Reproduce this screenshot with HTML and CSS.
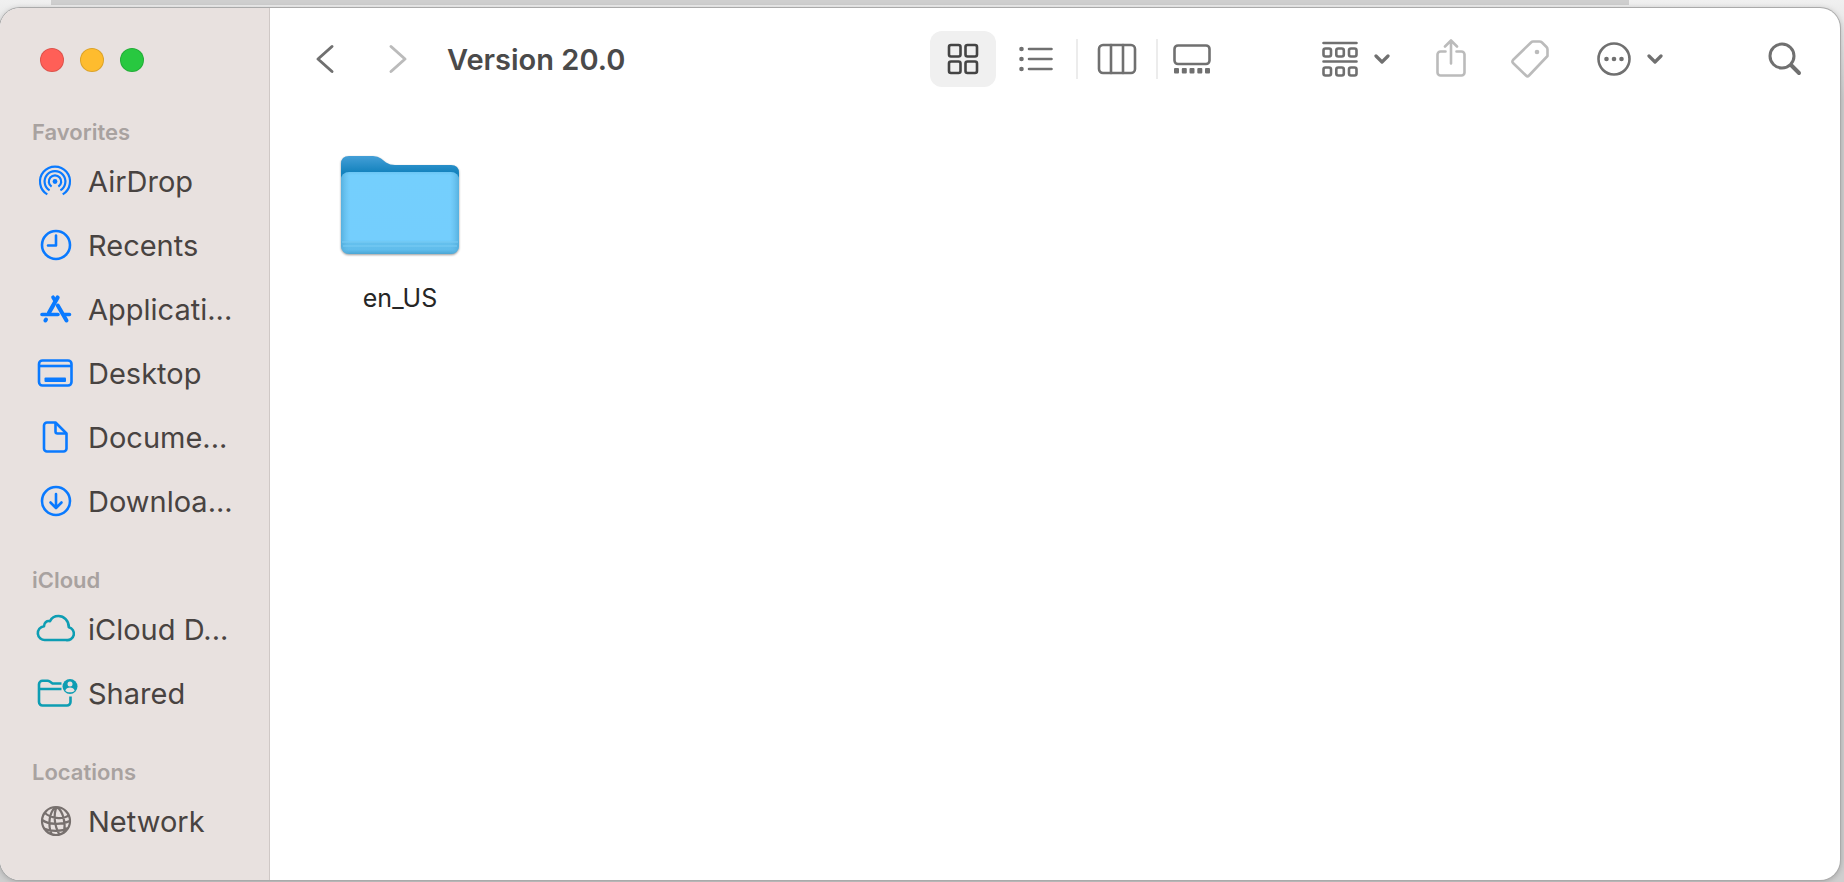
FILE: index.html
```html
<!DOCTYPE html>
<html lang="en">
<head>
<meta charset="utf-8">
<title>Version 20.0</title>
<link rel="stylesheet" href="styles.css">
</head>
<body>
<div class="backdrop"></div>
<div class="window">
  <aside class="sidebar">
    <div class="lights">
      <button class="light close" aria-label="Close"></button>
      <button class="light minimize" aria-label="Minimize"></button>
      <button class="light expand" aria-label="Zoom"></button>
    </div>
    <nav class="places">
      <section class="group">
        <h2 class="heading">Favorites</h2>
        <a class="place" href="#airdrop">
          <svg class="icon fine" viewBox="0 0 40 40"><circle cx="20" cy="20.500" r="2.400" fill="currentColor" stroke="none"/><path d="M16.600 25.700a6.200 6.200 0 1 1 6.800 0M14.600 29.400a10.400 10.400 0 1 1 10.800 0M12.300 33.400a15 15 0 1 1 15.400 0"/></svg>
          <span>AirDrop</span></a>
        <a class="place" href="#recents">
          <svg class="icon" viewBox="0 0 40 40"><circle cx="21" cy="20" r="14"/><path d="M21 10.500V20.500H13" stroke-linecap="round" stroke-linejoin="round"/></svg>
          <span>Recents</span></a>
        <a class="place" href="#applications">
          <svg class="icon" viewBox="0 0 40 40" stroke-linecap="round"><path d="M22.600 8.500L14 23.800" stroke-width="4.200"/><path d="M18 8.200l1.800 3" stroke-width="3.600"/><path d="M22.800 16.500L31.500 31.500" stroke-width="4"/><path d="M7 25.500H23M29.500 25.500H34.500" stroke-width="3.600"/><path d="M11 30.500L10.400 31.500" stroke-width="4"/></svg>
          <span>Applicati...</span></a>
        <a class="place" href="#desktop">
          <svg class="icon" viewBox="0 0 40 40"><rect x="4" y="7.500" width="32.500" height="25" rx="3.500"/><path d="M4 13H36"/><rect x="9.500" y="24.500" width="21.500" height="4.500" rx="1" fill="currentColor" stroke="none"/></svg>
          <span>Desktop</span></a>
        <a class="place" href="#documents">
          <svg class="icon" viewBox="0 0 40 40" stroke-linejoin="round"><path d="M12 5.500H20.500L31.500 16.500V31.500a3 3 0 0 1-3 3H12a3 3 0 0 1-3-3V8.500a3 3 0 0 1 3-3Z"/><path d="M20.500 6V14.500a2 2 0 0 0 2 2H31.500"/></svg>
          <span>Docume...</span></a>
        <a class="place" href="#downloads">
          <svg class="icon" viewBox="0 0 40 40"><circle cx="21" cy="20" r="14"/><path d="M21 13V26.500M15.500 21.500L21 27L26.500 21.500" stroke-linecap="round" stroke-linejoin="round"/></svg>
          <span>Downloa...</span></a>
      </section>
      <section class="group cloud">
        <h2 class="heading">iCloud</h2>
        <a class="place" href="#icloud">
          <svg class="icon" viewBox="0 0 40 40" stroke-linejoin="round"><path d="M10.500 31H31A6.500 6.500 0 0 0 33.800 18.300C34 11.500 28.700 7 23.500 7c-4 0-7 2-8.500 5.200-3.500-.8-6 1.700-6 5A6.900 6.900 0 0 0 10.500 31Z"/></svg>
          <span>iCloud D...</span></a>
        <a class="place" href="#shared">
          <svg class="icon" viewBox="0 0 40 40" stroke-linejoin="round"><path d="M26.500 10.500H17.500L14.800 8.500C14 8 13.500 7.800 12.500 7.800H7.500A3.500 3.500 0 0 0 4 11.300V29a3.500 3.500 0 0 0 3.500 3.500H32A3.500 3.500 0 0 0 35.500 29V23.500M4 16H26.500"/><circle cx="35" cy="13.500" r="7.500" fill="currentColor" stroke="none"/><circle cx="35" cy="11" r="2.500" fill="#e8e1df" stroke="none"/><path d="M30.300 17.800c.6-2.600 2.500-3.400 4.700-3.400s4.100.8 4.700 3.400c-2.400 2-7 2-9.400 0Z" fill="#e8e1df" stroke="none"/></svg>
          <span>Shared</span></a>
      </section>
      <section class="group locations">
        <h2 class="heading">Locations</h2>
        <a class="place" href="#network">
          <svg class="icon fine" viewBox="0 0 40 40"><circle cx="21" cy="20" r="14"/><path d="M20 6.200C14.500 12 12.500 23 16.500 33M21.500 6.200C18.500 13 19 25 24.500 33.500M22 6.200C28 10 31 22 29 31.500M10 12C15 17 28 19 33.500 14.500M7.200 19C14 24 27 24 34.800 20M9 27.500C16 31 27 30.500 33 27"/></svg>
          <span>Network</span></a>
      </section>
    </nav>
  </aside>
  <main class="main">
    <header class="toolbar">
      <button class="tool" aria-label="Back"><svg width="20" height="30" viewBox="0 0 20 30"><path d="M17 2.500L3 15L17 27.500"/></svg></button>
      <button class="tool faint" aria-label="Forward"><svg width="20" height="30" viewBox="0 0 20 30"><path d="M3 2.500L17 15L3 27.500"/></svg></button>
      <h1 class="title">Version 20.0</h1>
      <div class="views">
        <button class="view selected" aria-label="Icons"><svg width="32" height="32" viewBox="0 0 32 32"><rect x="2" y="2" width="11.500" height="11.500" rx="2"/><rect x="18.500" y="2" width="11.500" height="11.500" rx="2"/><rect x="2" y="18.500" width="11.500" height="11.500" rx="2"/><rect x="18.500" y="18.500" width="11.500" height="11.500" rx="2"/></svg></button>
        <button class="view" aria-label="List"><svg width="36" height="26" viewBox="0 0 36 26"><g fill="currentColor" stroke="none"><circle cx="3.500" cy="3" r="2.300"/><circle cx="3.500" cy="13" r="2.300"/><circle cx="3.500" cy="23" r="2.300"/></g><path d="M11 3H33.500M11 13H33.500M11 23H33.500"/></svg></button>
        <button class="view divided" aria-label="Columns"><svg width="40" height="32" viewBox="0 0 40 32"><rect x="2" y="2" width="36" height="28" rx="4"/><path d="M14 2V30M26 2V30"/></svg></button>
        <button class="view divided last" aria-label="Gallery"><svg width="38" height="30" viewBox="0 0 38 30"><rect x="1.500" y="1.500" width="35" height="18.500" rx="3.500"/><g fill="currentColor" stroke="none"><rect x="1" y="24" width="5" height="5.500" rx="1"/><rect x="8.800" y="24" width="5" height="5.500" rx="1"/><rect x="16.500" y="24" width="5" height="5.500" rx="1"/><rect x="24.300" y="24" width="5" height="5.500" rx="1"/><rect x="32" y="24" width="5" height="5.500" rx="1"/></g></svg></button>
      </div>
      <div class="actions">
        <button class="menu" aria-label="Group">
          <svg width="36" height="36" viewBox="0 0 36 36"><path d="M1.500 2H34.500M1.500 20.500H34.500"/><rect x="1.500" y="7.500" width="7.500" height="8" rx="2"/><rect x="14.300" y="7.500" width="7.500" height="8" rx="2"/><rect x="27" y="7.500" width="7.500" height="8" rx="2"/><rect x="1.500" y="26.500" width="7.500" height="8" rx="2"/><rect x="14.300" y="26.500" width="7.500" height="8" rx="2"/><rect x="27" y="26.500" width="7.500" height="8" rx="2"/></svg>
          <svg width="16" height="10" viewBox="0 0 16 10" stroke-width="3.200"><path d="M2 2L8 8L14 2"/></svg>
        </button>
        <button class="action" aria-label="Share"><svg width="30" height="40" viewBox="0 0 30 40"><path d="M9.500 12.500H4.500A3 3 0 0 0 1.500 15.500V33.500A3 3 0 0 0 4.500 36.500H25.500A3 3 0 0 0 28.500 33.500V15.500A3 3 0 0 0 25.500 12.500H20.500M15 24.500V2M9 7.500L15 1.500L21 7.500"/></svg></button>
        <button class="action" aria-label="Tags"><svg width="38" height="38" viewBox="0 0 38 38"><path d="M22 1.500H28.500Q30 1.500 31 2.500L35.500 7Q36.500 8 36.500 9.500V16L18 35.500Q16.500 37 15 35.500L2 23Q.8 21.500 2 20L20 2.500Q21 1.500 22 1.500Z"/><circle cx="26" cy="12" r="2.300" fill="currentColor" stroke="none"/></svg></button>
        <button class="menu" aria-label="More">
          <svg width="34" height="34" viewBox="0 0 34 34"><circle cx="17" cy="17" r="15.500"/><g fill="currentColor" stroke="none"><circle cx="9.500" cy="17" r="2.300"/><circle cx="17" cy="17" r="2.300"/><circle cx="24.500" cy="17" r="2.300"/></g></svg>
          <svg width="16" height="10" viewBox="0 0 16 10" stroke-width="3.200"><path d="M2 2L8 8L14 2"/></svg>
        </button>
      </div>
      <button class="tool search" aria-label="Search"><svg width="34" height="34" viewBox="0 0 34 34"><circle cx="14" cy="14" r="12"/><path d="M23.500 23.500L31 31" stroke-width="4"/></svg></button>
    </header>
    <div class="files">
      <a class="file" href="#en_US">
        <svg class="folder" viewBox="0 0 124 108">
          <defs>
            <linearGradient id="back" x1="0" y1="0" x2="0" y2="1"><stop offset="0" stop-color="#449fd7"/><stop offset=".18" stop-color="#1583be"/><stop offset="1" stop-color="#1583be"/></linearGradient>
            <linearGradient id="front" x1="0" y1="0" x2="0" y2="1"><stop offset="0" stop-color="#6cc5f3"/><stop offset=".04" stop-color="#74cffd"/><stop offset=".83" stop-color="#74cefd"/><stop offset=".86" stop-color="#64c0ee"/><stop offset=".95" stop-color="#60bceb"/><stop offset="1" stop-color="#4ba6d4"/></linearGradient>
            <linearGradient id="edge"><stop offset="0" stop-color="#4ea9d8" stop-opacity=".8"/><stop offset=".08" stop-color="#66bce8" stop-opacity="0"/><stop offset=".92" stop-color="#66bce8" stop-opacity="0"/><stop offset="1" stop-color="#4ea9d8" stop-opacity=".8"/></linearGradient>
          </defs>
          <path fill="url(#back)" d="M3 92V11Q3 3 11 3H35Q40 3 43 5.500L48 9.500Q52 12 57 12H113Q121 12 121 20V92Z"/>
          <rect x="3" y="19" width="118" height="82" rx="8" fill="url(#front)"/>
          <rect x="3" y="19" width="118" height="82" rx="8" fill="url(#edge)"/>
          <path d="M4 89H120M5 93H119" fill="none" stroke="#7accf4" stroke-width="1"/>
        </svg>
        <span class="name">en_US</span>
      </a>
    </div>
  </main>
</div>
</body>
</html>
```
FILE: styles.css
```css
* {
  box-sizing: border-box;
}

body {
  display: flex;
  flex-direction: column;
  min-height: 100vh;
  margin: 0;
  padding: 0 4px 2px 0;
  background: linear-gradient(#f0f0f0, #cfcfcf 100px);
  font-family: Inter, "Liberation Sans", sans-serif;
}

.backdrop {
  height: 5px;
  margin: 0 211px 3px 51px;
  background: #cfcfcf;
}

.window {
  display: flex;
  flex: 1;
  overflow: hidden;
  border-radius: 20px;
  background: #fff;
  box-shadow: 0 0 0 1px #aaa, 0 1px 6px #0004;
}

button {
  padding: 0;
  border: 0;
  background: none;
  color: #707070;
}

svg {
  display: block;
  flex: none;
  fill: none;
  stroke: currentColor;
}

.sidebar {
  flex: none;
  width: 270px;
  padding-top: 40px;
  border-right: 1px solid #cfc8c6;
  background: #e8e1df;
}

.lights {
  display: flex;
  gap: 16px;
  padding-left: 40px;
}

.light {
  width: 24px;
  height: 24px;
  border: 1px solid #0002;
  border-radius: 50%;
}

.close {
  background: #ff5f57;
}

.minimize {
  background: #febc2e;
}

.expand {
  background: #28c840;
}

.places {
  display: flex;
  flex-direction: column;
  gap: 30px;
  padding-top: 43px;
}

.group {
  color: #0a7aff;
}

.cloud {
  color: #0d9db3;
}

.locations {
  color: #77706e;
}

.heading {
  margin: 0;
  padding-left: 32px;
  color: #a8a2a0;
  font-size: 22px;
  font-weight: 600;
  line-height: 34px;
}

.place {
  display: flex;
  align-items: center;
  gap: 13px;
  height: 64px;
  padding-left: 35px;
  color: inherit;
  font-size: 29px;
  text-decoration: none;
  white-space: nowrap;
}

.place span {
  color: #484341;
}

.icon {
  width: 40px;
  height: 40px;
  overflow: visible;
  stroke-width: 2.6px;
}

.fine {
  stroke-width: 2.2px;
}

.main {
  flex: 1;
  min-width: 0;
}

.toolbar {
  display: flex;
  align-items: center;
  height: 102px;
  padding: 0 31px;
}

.toolbar svg {
  stroke-linecap: round;
  stroke-linejoin: round;
}

.tool {
  display: grid;
  place-items: center;
  width: 48px;
  height: 56px;
  margin-right: 25px;
  stroke-width: 3px;
}

.faint {
  color: #bbb;
}

.title {
  margin: 0;
  color: #4a4a4a;
  font-size: 29px;
  font-weight: 600;
  white-space: nowrap;
}

.views {
  display: flex;
  align-items: center;
  margin-left: auto;
  stroke-width: 2.6px;
}

.view {
  display: grid;
  place-items: center;
  width: 80px;
  height: 40px;
}

.selected {
  width: 66px;
  height: 56px;
  border-radius: 12px;
  background: #f0f0f0;
  color: #444;
}

.divided {
  border-left: 2px solid #ececec;
}

.last {
  width: 70px;
}

.actions {
  display: flex;
  align-items: center;
  gap: 35px;
  margin: 0 94px 0 86px;
  stroke-width: 2.6px;
}

.menu {
  display: flex;
  align-items: center;
  gap: 16px;
  height: 56px;
  padding: 0 4px 0 10px;
}

.action {
  display: grid;
  place-items: center;
  width: 44px;
  height: 56px;
  color: #bbb;
}

.search {
  margin-right: 0;
}

.files {
  display: grid;
  grid-template-columns: repeat(auto-fill, 190px);
  padding: 43px 35px;
}

.file {
  display: flex;
  flex-direction: column;
  align-items: center;
  gap: 21px;
  color: #262626;
  font-size: 25px;
  line-height: 32px;
  text-decoration: none;
}

.folder {
  width: 124px;
  height: 108px;
  stroke: none;
  filter: drop-shadow(0 1px 1px #0006);
}
```
